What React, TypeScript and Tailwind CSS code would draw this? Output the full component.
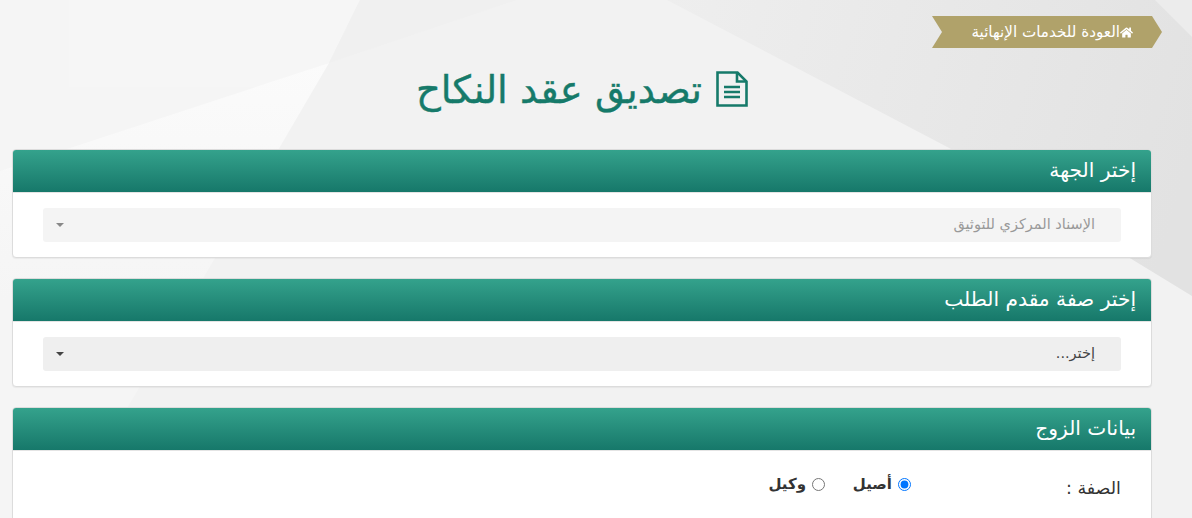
import { FaHome } from 'react-icons/fa'

const font = "font-['DejaVu_Sans','Noto_Sans',sans-serif]"

function Panel({ title, children }: { title: string; children: React.ReactNode }) {
  return (
    <section className="mb-[20px] overflow-hidden rounded-[4px] border border-[#dcdcdc] bg-white shadow-[0_1px_1px_rgba(0,0,0,0.05)]">
      <h2 className="flex h-[42px] items-center bg-gradient-to-b from-[#34a28c] to-[#16786a] px-[15px] pb-[1px] text-[20.2px] font-normal text-white">{title}</h2>
      <div className="border-t border-[#e4e4e4]">{children}</div>
    </section>
  )
}

function Select({ label, muted }: { label: string; muted?: boolean }) {
  return (
    <div className="px-[30px] py-[15px]">
      <div className={`flex h-[34px] items-center justify-between rounded-[3px] pl-[13px] pr-[26px] text-[14.5px] ${muted ? 'bg-[#f4f4f4] text-[#999999]' : 'bg-[#efefef] text-[#444444]'}`}>
        <span>{label}</span>
        <span className={`h-0 w-0 border-x-[4px] border-t-[4px] border-x-transparent ${muted ? 'border-t-[#888888]' : 'border-t-[#444444]'}`} />
      </div>
    </div>
  )
}

export default function App() {
  return (
    <div dir="rtl" className={`relative h-[518px] overflow-hidden bg-[#f2f2f2] ${font}`}>
      {/* background facets */}
      <svg className="absolute inset-0" width="1192" height="518" viewBox="0 0 1192 518">
        <defs>
          <linearGradient id="light" x1="0" y1="60" x2="0" y2="300" gradientUnits="userSpaceOnUse">
            <stop offset="0" stopColor="#fbfbfb" />
            <stop offset="1" stopColor="#f5f5f5" />
          </linearGradient>
          <linearGradient id="dark" x1="667" y1="0" x2="1192" y2="150" gradientUnits="userSpaceOnUse">
            <stop offset="0" stopColor="#eeeeee" />
            <stop offset="1" stopColor="#e2e2e2" />
          </linearGradient>
        </defs>
        <polygon points="0,0 360,0 63,518 0,518" fill="#f5f5f5" />
        <polygon points="69,0 360,0 329,63 256,87 69,87" fill="#f6f6f6" />
        <polygon points="329,63 0,171 0,518 63,518" fill="url(#light)" />
        <polygon points="360,0 517,0 329,63" fill="#f0f0f0" />
        <polygon points="667,0 1192,0 1192,296 953,150" fill="url(#dark)" />
        <polygon points="1155,0 1192,0 1192,37" fill="#ececec" />
      </svg>

      <div className="relative pl-[12px] pr-[40px]">
        <div className="flex h-[149px] flex-col">
          <div className="-mr-[10px] flex justify-start pt-[16px]">
            <a className="flex h-[32px] w-[230px] items-center bg-[#b0a26a] pr-[29px] text-[15.2px] text-white [clip-path:polygon(0_0,220px_0,230px_50%,220px_100%,0_100%,10px_50%)]">
              <FaHome size={13} />
              العودة للخدمات الإنهائية
            </a>
          </div>
          <h1 className="mt-[14px] flex items-center justify-center gap-[14px] text-[38.5px] font-normal leading-[50px] text-[#167a6a] [-webkit-text-stroke:0.4px_#167a6a]">
            <svg width="32" height="36" viewBox="0 0 32 36" fill="none" stroke="currentColor" strokeWidth="2.6">
              <path d="M1.5 1.5h20l9 9v24h-29z" />
              <path d="M21 1.5v9h9" />
              <path d="M8 16h16M8 21h16M8 26h16" />
            </svg>
            <span className="mt-[3px]">تصديق عقد النكاح</span>
          </h1>
        </div>

        <Panel title="إختر الجهة">
          <Select label="الإسناد المركزي للتوثيق" muted />
        </Panel>
        <Panel title="إختر صفة مقدم الطلب">
          <Select label="إختر..." />
        </Panel>
        <Panel title="بيانات الزوج">
          <div className="flex h-[80px] items-start pr-[30px] pt-[22px] text-[#333333]">
            <span className="mt-[2px] w-[210px] text-[17.5px]">الصفة :</span>
            <label className="flex w-[86px] items-center gap-[6px] text-[15px] font-bold">
              <input type="radio" name="type" defaultChecked className="m-0 size-[13px] accent-[#0075ff]" />
              أصيل
            </label>
            <label className="flex items-center gap-[6px] text-[15px] font-bold">
              <input type="radio" name="type" className="m-0 size-[13px]" />
              وكيل
            </label>
          </div>
        </Panel>
      </div>
    </div>
  )
}
